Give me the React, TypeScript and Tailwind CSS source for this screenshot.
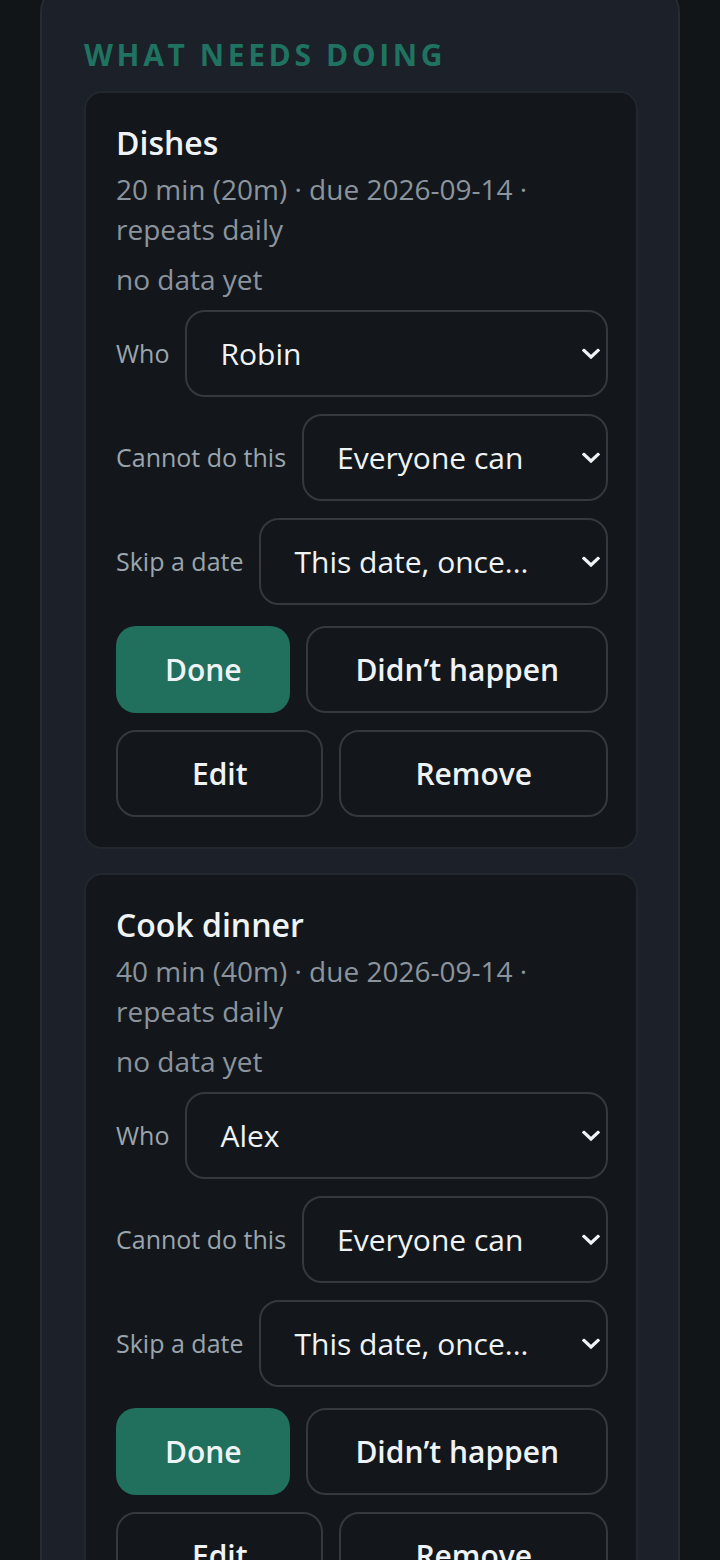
import { useState } from "react";

type Chore = {
  id: string;
  name: string;
  minutes: number;
  due: string;
  who: string;
};

const chores: Chore[] = [
  { id: "dishes", name: "Dishes", minutes: 20, due: "2026-09-14", who: "Robin" },
  { id: "cook", name: "Cook dinner", minutes: 40, due: "2026-09-14", who: "Alex" },
];

const people = ["Robin", "Alex", "Sam"];

function Chevron() {
  return (
    <svg
      width="18"
      height="11"
      viewBox="0 0 18 11"
      className="pointer-events-none absolute right-[8px] top-1/2 -translate-y-1/2"
    >
      <polyline
        points="2,2 9,8.5 16,2"
        fill="none"
        stroke="#f0f3f6"
        strokeWidth="3.2"
        strokeLinecap="square"
      />
    </svg>
  );
}

function Field({
  label,
  value,
  options,
  onChange,
}: {
  label: string;
  value: string;
  options: string[];
  onChange: (v: string) => void;
}) {
  return (
    <label className="flex items-center gap-4">
      <span className="text-[25px] text-[#9aa5ae] whitespace-nowrap">{label}</span>
      <div className="relative flex-1">
        <select
          value={value}
          onChange={(e) => onChange(e.target.value)}
          className="h-[87px] w-full appearance-none rounded-[20px] border-2 border-[#34393f] bg-transparent pl-[33px] pr-12 text-[30px] text-[#f0f3f6] outline-none"
        >
          {options.map((o) => (
            <option key={o} value={o} className="bg-[#13171b]">
              {o}
            </option>
          ))}
        </select>
        <Chevron />
      </div>
    </label>
  );
}

function ChoreCard({ chore }: { chore: Chore }) {
  const [who, setWho] = useState(chore.who);
  const [cannot, setCannot] = useState("Everyone can");
  const [skip, setSkip] = useState("This date, once...");

  const btn =
    "h-[87px] flex-auto whitespace-nowrap rounded-[20px] border-2 px-[46px] text-[30px] font-semibold text-[#f0f3f6]";

  return (
    <div className="rounded-[18px] border-2 border-[#22272d] bg-[#13171b] pl-[30px] pr-[28px] pt-[29px] pb-[30px]">
      <h3 className="text-[32px] font-semibold leading-[41px] text-[#f0f3f6]">{chore.name}</h3>
      <p className="mt-[6px] text-[28px] leading-[40px] text-[#8b949e]">
        {chore.minutes} min ({chore.minutes}m) · due {chore.due} · repeats daily
      </p>
      <p className="mt-[10px] text-[28px] leading-[40px] text-[#8b949e]">no data yet</p>

      <div className="mt-[11px] flex flex-col gap-[17px]">
        <Field label="Who" value={who} options={people} onChange={setWho} />
        <Field
          label="Cannot do this"
          value={cannot}
          options={["Everyone can", ...people]}
          onChange={setCannot}
        />
        <Field
          label="Skip a date"
          value={skip}
          options={["This date, once...", "Every week"]}
          onChange={setSkip}
        />
      </div>

      <div className="mt-[21px] flex flex-col gap-[17px]">
        <div className="flex gap-4">
          <button className={`${btn} border-transparent bg-[#21705e]`}>Done</button>
          <button className={`${btn} border-[#34393f]`}>Didn’t happen</button>
        </div>
        <div className="flex gap-4">
          <button className={`${btn} border-[#34393f]`}>Edit</button>
          <button className={`${btn} border-[#34393f]`}>Remove</button>
        </div>
      </div>
    </div>
  );
}

export default function App() {
  return (
    <div
      className="min-h-screen bg-[#121518] px-10"
      style={{ fontFamily: '"Open Sans", "Noto Sans", sans-serif' }}
    >
      <section className="-mt-4 rounded-[28px] border-2 border-[#262b34] bg-[#1b2029] pl-[42px] pr-[40px] pt-[50px] pb-10">
        <h2 className="text-[30px] font-bold uppercase leading-[38px] tracking-[0.12em] text-[#1f7360]">
          What needs doing
        </h2>
        <div className="mt-[17px] flex flex-col gap-[24px]">
          {chores.map((c) => (
            <ChoreCard key={c.id} chore={c} />
          ))}
        </div>
      </section>
    </div>
  );
}
